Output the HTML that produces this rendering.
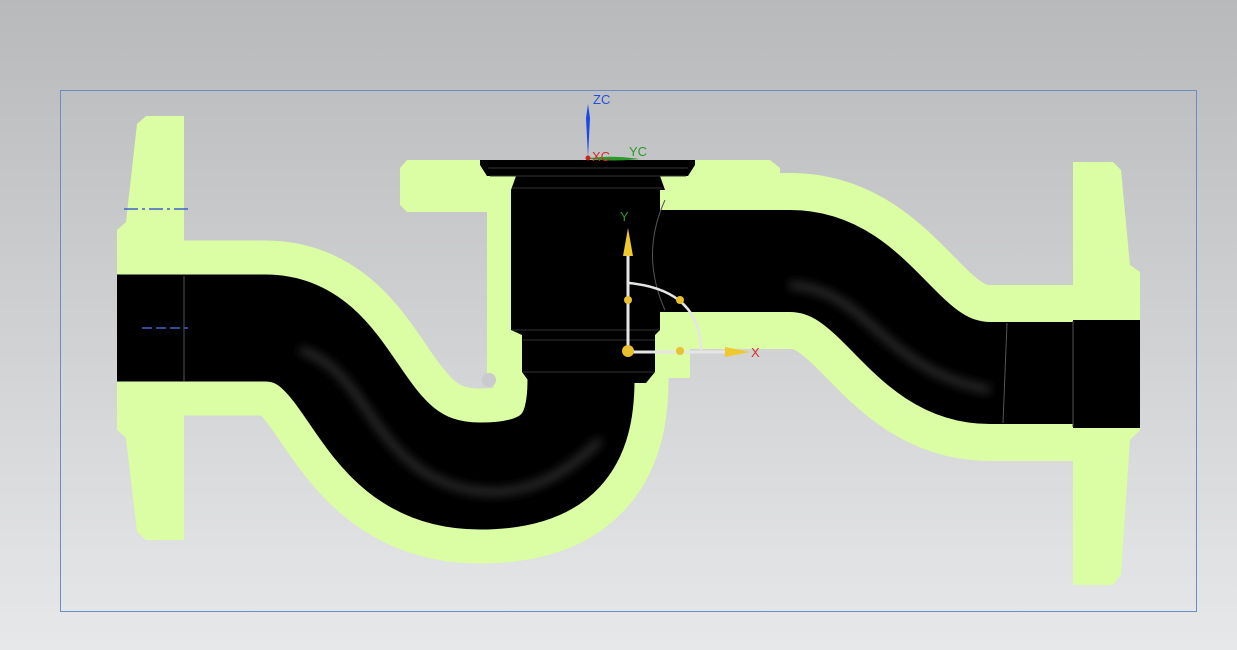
<!DOCTYPE html>
<html><head><meta charset="utf-8"><style>
html,body{margin:0;padding:0;width:1237px;height:650px;overflow:hidden}
body{background:linear-gradient(#b8b9bb,#e7e8ea)}
svg{position:absolute;left:0;top:0}
text{font-family:"Liberation Sans",sans-serif;font-size:13px}
</style></head><body>
<svg width="1237" height="650" viewBox="0 0 1237 650">
<defs>
<filter id="bl" x="-10%" y="-50%" width="120%" height="200%"><feGaussianBlur stdDeviation="5"/></filter>
</defs>
<rect x="60.5" y="90.5" width="1136" height="521" fill="none" stroke="#6b8cc6" stroke-width="1"/>
<g fill="#dbfda3">
<polygon points="137,124 146,116 184,116 184,540 146,540 137,532 126,438 117,430 117,230 126,222"/>
<polygon points="1073,162 1113,162 1121,170 1130,265 1140,272 1140,430 1130,440 1121,575 1113,585 1073,585"/>
<polygon points="400,168 407,160 770,160 780,168 780,212 407,212 400,205"/>
<rect x="487" y="160" width="203" height="218"/>
</g>
<path d="M150 328 H265 C360 328 350 476 480 476 C560 476 581 440 581 380 V330" fill="none" stroke="#dbfda3" stroke-width="175"/>
<path d="M660 261 H790 C880 261 900 373 990 373 H1100" fill="none" stroke="#dbfda3" stroke-width="176"/>
<circle cx="489" cy="380" r="7" fill="#c9cacc"/>
<path d="M117 328 H265 C360 328 350 476 480 476 C560 476 581 440 581 380 V330" fill="none" stroke="#000" stroke-width="107"/>
<path d="M655 261 H790 C880 261 900 373 990 373 H1140" fill="none" stroke="#000" stroke-width="102"/>
<path d="M1073 320 H1140 V428 H1073Z" fill="#000"/>
<!-- highlights -->
<path d="M300 350 C370 370 370 470 470 490 C520 498 560 480 600 440" fill="none" stroke="#3a3a3a" stroke-width="6" filter="url(#bl)"/>
<path d="M790 285 C870 290 880 370 990 390" fill="none" stroke="#3a3a3a" stroke-width="6" filter="url(#bl)"/>
<path d="M184 276 V381 M1073 321 V427" stroke="#555" stroke-width="1"/>
<path d="M1007 323 L1003 423" stroke="#555" stroke-width="1"/>
<path d="M480 160 H695 V165 L688 176 H660 L665 190 H660 V330 L655 335 V372 L646 383 H530 L522 372 V335 L511 330 V190 L516 176 H487 L480 165Z" fill="#000"/>
<path d="M488 168 H688 M490 176 H686 M512 188 H662 M512 330 H660 M523 340 H655 M523 372 H655" stroke="#333" stroke-width="1"/>
<path d="M665 200 Q640 255 665 310" fill="none" stroke="#555" stroke-width="1"/>
<path d="M124 209 H190" stroke="#3c64c8" stroke-width="1.5" stroke-dasharray="14,4,3,4"/>
<path d="M142 328 H188" stroke="#3c64c8" stroke-width="1.5" stroke-dasharray="10,4"/>
<polygon points="588,104 590,118 588,157 586,118" fill="#1e46e6"/>
<path d="M590 158 Q612 155 640 159 Q612 162 590 159Z" fill="#2a9a2a"/>
<circle cx="588" cy="158" r="2.5" fill="#d02020"/>
<text x="593" y="104" fill="#2050e0">ZC</text>
<text x="592" y="161" fill="#d03030">XC</text>
<text x="629" y="156" fill="#2a9a2a">YC</text>
<path d="M628 352 V255 M628 352 H725" stroke="#e6e6e6" stroke-width="3"/>
<path d="M629 283 Q700 290 701 350" fill="none" stroke="#e6e6e6" stroke-width="2.5"/>
<polygon points="628,228 623,256 633,256" fill="#f0c830"/>
<polygon points="750,352 725,347 725,357" fill="#f0c830"/>
<circle cx="628" cy="351" r="6" fill="#e8c030"/>
<circle cx="628" cy="300" r="4" fill="#e8c030"/>
<circle cx="680" cy="351" r="4" fill="#e8c030"/>
<circle cx="680" cy="300" r="4" fill="#e8c030"/>
<text x="620" y="221" fill="#2a9a2a">Y</text>
<text x="751" y="357" fill="#d03030">X</text>
</svg>
</body></html>
